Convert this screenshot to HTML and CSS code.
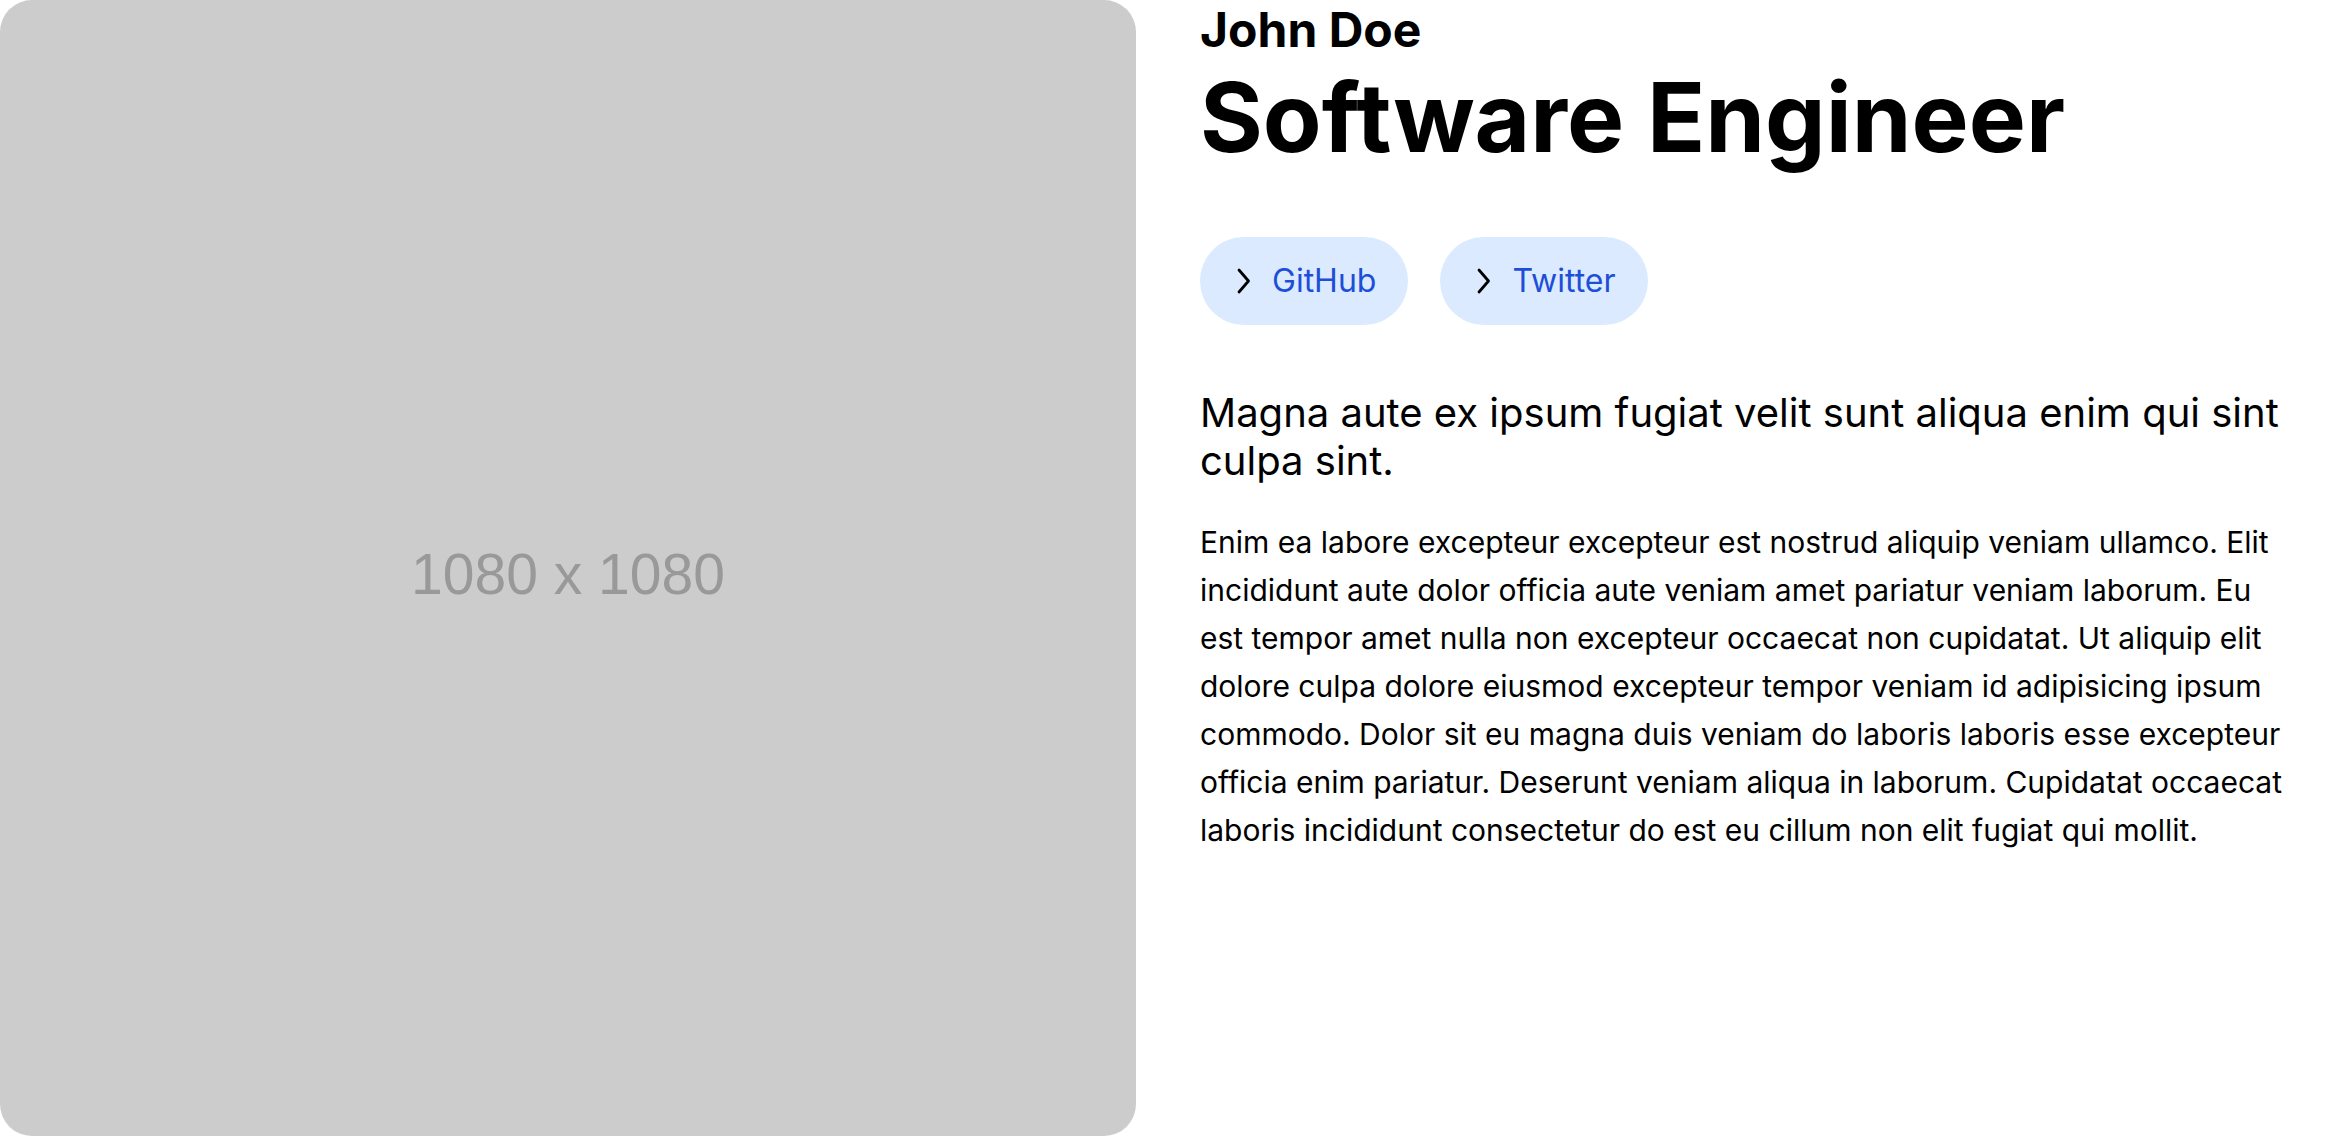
FILE: index.html
```html
<!DOCTYPE html>
<html lang="en">
<head>
<meta charset="utf-8">
<title>John Doe - Software Engineer</title>
<link rel="stylesheet" href="styles.css">
</head>
<body>
<main class="profile">
  <div class="photo">
    <span class="photo-label">1080 x 1080</span>
  </div>
  <section class="info">
    <h2 class="name">John Doe</h2>
    <h1 class="role">Software Engineer</h1>
    <nav class="links">
      <a class="link" href="#">
        <svg class="chev" width="16" height="28" viewBox="0 0 16 28" aria-hidden="true"><path d="M3 3 L12.5 14 L3 25" fill="none" stroke="#000" stroke-width="2.75" stroke-linecap="round" stroke-linejoin="round"/></svg>
        <span>GitHub</span>
      </a>
      <a class="link" href="#">
        <svg class="chev" width="16" height="28" viewBox="0 0 16 28" aria-hidden="true"><path d="M3 3 L12.5 14 L3 25" fill="none" stroke="#000" stroke-width="2.75" stroke-linecap="round" stroke-linejoin="round"/></svg>
        <span>Twitter</span>
      </a>
    </nav>
    <p class="lead">Magna aute ex ipsum fugiat velit sunt aliqua enim qui sint culpa sint.</p>
    <p class="body">Enim ea labore excepteur excepteur est nostrud aliquip veniam ullamco. Elit<br>
incididunt aute dolor officia aute veniam amet pariatur veniam laborum. Eu<br>
est tempor amet nulla non excepteur occaecat non cupidatat. Ut aliquip elit<br>
dolore culpa dolore eiusmod excepteur tempor veniam id adipisicing ipsum<br>
commodo. Dolor sit eu magna duis veniam do laboris laboris esse excepteur<br>
officia enim pariatur. Deserunt veniam aliqua in laborum. Cupidatat occaecat<br>
laboris incididunt consectetur do est eu cillum non elit fugiat qui mollit.</p>
  </section>
</main>
</body>
</html>
```

FILE: styles.css
```css
* { box-sizing: border-box; }
html, body { margin: 0; padding: 0; background: #fff; }
body {
  font-family: Inter, "Noto Sans", "Liberation Sans", sans-serif;
  color: #000;
}
.profile {
  display: grid;
  grid-template-columns: 1fr 1fr;
  gap: 64px;
  width: 2336px;
}
.photo {
  width: 1136px;
  height: 1136px;
  background: #cccccc;
  border-radius: 32px;
  display: flex;
  align-items: center;
  justify-content: center;
  padding-top: 12px;
}
.photo-label {
  font-family: "Liberation Sans", Arial, sans-serif;
  font-size: 57px;
  color: #999999;
}
.info {
  display: flex;
  flex-direction: column;
  align-items: flex-start;
}
.name {
  margin: 0;
  font-size: 48px;
  font-weight: 700;
  line-height: normal;
}
.role {
  margin: 0;
  font-size: 96px;
  font-weight: 700;
  line-height: normal;
}
.links {
  display: flex;
  gap: 32px;
  margin-top: 62px;
}
.link {
  display: flex;
  align-items: center;
  gap: 20px;
  height: 88px;
  padding: 0 32px 0 36px;
  border-radius: 9999px;
  background: #dbeafe;
  color: #1d4ed8;
  text-decoration: none;
  font-size: 32px;
  line-height: 40px;
}
.chev { display: block; flex: none; }
.lead {
  margin: 64px 0 0;
  font-size: 40px;
  line-height: 48px;
}
.body {
  margin: 33px 0 0;
  font-size: 30px;
  line-height: 48px;
}
```
